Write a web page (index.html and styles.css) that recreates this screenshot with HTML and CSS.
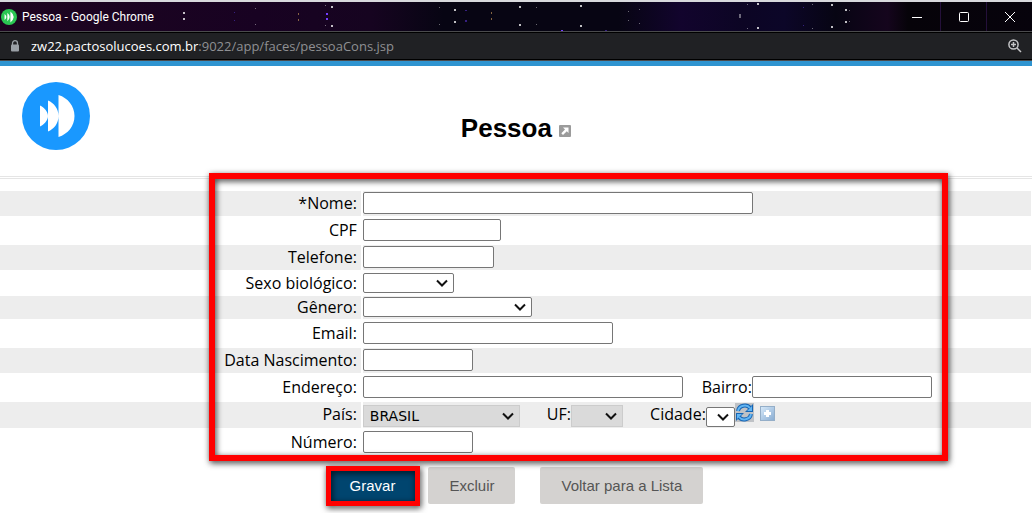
FILE: index.html
```html
<!DOCTYPE html>
<html lang="pt-BR">
<head>
<meta charset="utf-8">
<title>Pessoa</title>
<link rel="stylesheet" href="styles.css">
</head>
<body>
<header class="titlebar">
  <svg class="stars" viewBox="0 0 1032 29" preserveAspectRatio="xMidYMid slice" aria-hidden="true">
    <g fill="#fff">
      <path opacity=".75" d="M183 10h2v2h-2zM183 16h2v2h-2zM331 4h2v2h-2zM331 23h2v2h-2zM454 7h2v2h-2zM454 19h2v2h-2zM519 4h2v2h-2zM519 22h2v2h-2zM580 3h2v2h-2zM580 23h2v2h-2zM757 1h2v2h-2zM757 25h2v2h-2zM831 2h2v2h-2zM831 24h2v2h-2zM845 7h2v2h-2zM845 19h2v2h-2z"/>
      <path opacity=".4" d="M255 6h1v1h-1zM255 22h1v1h-1zM325 3h1v1h-1zM325 23h1v1h-1zM439 5h1v1h-1zM439 22h1v1h-1zM536 5h1v1h-1zM536 22h1v1h-1zM628 9h1v1h-1zM628 18h1v1h-1zM639 7h1v1h-1zM639 21h1v1h-1zM739 12h2v4h-2zM747 2h1v1h-1zM747 26h1v1h-1zM812 2h1v1h-1zM812 26h1v1h-1zM849 8h1v1h-1zM849 19h1v1h-1z"/>
    </g>
    <path fill="#bb8d55" opacity=".7" d="M298 11h1v2h-1zM298 17h1v2h-1zM491 10h1v2h-1zM491 16h1v2h-1z"/>
    <path fill="#743cff" d="M326 11h2v2h-2zM326 16h2v2h-2zM561 28h2v1h-2z"/>
    <path fill="#362080" d="M234 10h1v1h-1zM234 18h1v1h-1zM465 8h2v1h-2zM465 18h2v2h-2zM803 5h1v1h-1zM803 23h1v1h-1zM605 28h2v1h-2z"/>
  </svg>
  <svg class="favicon" viewBox="0 0 68 68" aria-hidden="true"><circle cx="34" cy="34" r="34" fill="#2bc653"/><path fill="#fff" d="M15 21q16 13 0 26zM27 16q20 18 0 36zM40 11q28 23 0 46z"/></svg>
  <span class="window-title">Pessoa - Google Chrome</span>
  <div class="window-controls">
    <button type="button" aria-label="Minimizar"><svg viewBox="0 0 12 12"><path d="M1 6.500h10"/></svg></button>
    <button type="button" aria-label="Maximizar"><svg viewBox="0 0 12 12"><rect x="1.500" y="1.500" width="9" height="9" rx="1"/></svg></button>
    <button type="button" aria-label="Fechar"><svg viewBox="0 0 12 12"><path d="M1 1l10 10M11 1L1 11"/></svg></button>
  </div>
</header>
<div class="urlbar">
  <svg class="lock" viewBox="0 0 10 12" aria-hidden="true"><path fill="none" stroke="#9aa0a6" stroke-width="1.300" d="M2.500 5V3.200a2.500 2.500 0 0 1 5 0V5"/><rect x="1" y="4.500" width="8" height="7" rx="1" fill="#9aa0a6"/></svg>
  <span class="url"><b>zw22.pactosolucoes.com.br</b>:9022/app/faces/pessoaCons.jsp</span>
  <svg class="magnifier" viewBox="0 0 14 14" aria-hidden="true"><circle cx="5.500" cy="5.500" r="4.600"/><path d="M9 9l4 4M3 5.500h5M5.500 3v5"/></svg>
</div>
<main>
  <div class="page-head">
    <svg class="logo" viewBox="0 0 68 68" role="img" aria-label="Pacto"><circle cx="34" cy="34" r="34" fill="#1998ff"/><path fill="#fff" d="M18 23.500c4 2 8 6 8 10.500s-4 8.500-8 10.500zM26 18.500c6 2.500 10.500 8 10.500 15.500S32 47 26 49.500zM36.500 13C46 16 52.500 24 52.500 34S46 52 36.500 55z"/></svg>
    <h1>Pessoa
      <a href="#" aria-label="Abrir em nova janela"><svg viewBox="0 0 12 12"><rect width="12" height="12" rx="1" fill="#9b9b9b"/><path d="M4 2.500h5.500V8L7.800 6.300 4 10 2.300 8.300 6 4.500z" fill="#fff"/></svg></a>
    </h1>
  </div>
  <form>
    <div class="fields">
      <div class="row striped"><label for="nome">*Nome:</label><div class="cell"><input id="nome" class="w-name" type="text"></div></div>
      <div class="row"><label for="cpf">CPF</label><div class="cell"><input id="cpf" class="w-cpf" type="text"></div></div>
      <div class="row striped"><label for="tel">Telefone:</label><div class="cell"><input id="tel" class="w-phone" type="text"></div></div>
      <div class="row compact"><label for="sexo">Sexo biológico:</label><div class="cell"><select id="sexo" class="w-sex"><option></option></select></div></div>
      <div class="row striped choice"><label for="genero">Gênero:</label><div class="cell"><select id="genero" class="w-gender"><option></option></select></div></div>
      <div class="row"><label for="email">Email:</label><div class="cell"><input id="email" class="w-email" type="text"></div></div>
      <div class="row striped"><label for="nasc">Data Nascimento:</label><div class="cell"><input id="nasc" class="w-short" type="text"></div></div>
      <div class="row"><label for="end">Endereço:</label><div class="cell"><input id="end" class="w-address" type="text"><label class="inline bairro" for="bairro">Bairro:</label><input id="bairro" class="w-district" type="text"></div></div>
      <div class="row striped location"><label for="pais">País:</label><div class="cell"><select id="pais" class="w-country locked"><option>BRASIL</option></select><label class="inline uf" for="uf">UF:</label><select id="uf" class="w-state locked"><option></option></select><label class="inline cidade" for="cidade">Cidade:</label><select id="cidade" class="w-city"><option></option></select><button class="icon-button refresh" type="button" aria-label="Atualizar"><svg viewBox="0 0 19 19"><rect width="19" height="19" fill="#bfc2c6"/><g fill="none" stroke="#1765b4" stroke-width="4"><path d="M3 8c1-6 9-7 12-3M16 11c-1 6-9 7-12 3"/></g><path fill="#1765b4" d="M18 1v8h-8zM1 18v-8h8z"/><g fill="none" stroke="#62b5f2" stroke-width="2"><path d="M3 8c1-6 9-7 12-3M16 11c-1 6-9 7-12 3"/></g><path fill="#62b5f2" d="M17 3v5h-5zM2 16v-5h5z"/></svg></button><button class="icon-button add" type="button" aria-label="Adicionar cidade"><svg viewBox="0 0 15 15"><defs><linearGradient id="add-fill" x2="1" y2="1"><stop stop-color="#d8eafa"/><stop offset="1" stop-color="#88acd2"/></linearGradient></defs><rect x=".5" y=".5" width="14" height="14" fill="url(#add-fill)" stroke="#94aec8"/><path d="M6 4h3v2h2v3H9v2H6V9H4V6h2z" fill="#fff"/></svg></button></div></div>
      <div class="row"><label for="numero">Número:</label><div class="cell"><input id="numero" class="w-short" type="text"></div></div>
      <div class="highlight area"></div>
    </div>
    <div class="actions">
      <div class="marked"><button class="btn primary" type="button">Gravar</button><div class="highlight around"></div></div>
      <button class="btn" type="button">Excluir</button>
      <button class="btn back" type="button">Voltar para a Lista</button>
    </div>
  </form>
</main>
</body>
</html>
```
FILE: styles.css
```css
* { box-sizing: border-box; }
body { margin: 0; background: #fff; color: #000; font-family: "Liberation Sans", Arial, sans-serif; }
button, input, select { margin: 0; }

.titlebar {
  position: relative;
  display: flex;
  align-items: center;
  height: 31px;
  padding-left: 1px;
  border-top: 2px solid #d8d9dd;
  background: linear-gradient(90deg, #1d0520, #180222 25%, #160420 36%, #070513 43%, #070513 60%, #12042d 66%, #0c0524 72%, #0c0628 76%, #070513 81%, #15051d 86%, #060309 88%, #07030c);
}
.stars { position: absolute; inset: 0; width: 100%; height: 100%; }
.favicon { width: 16px; height: 16px; margin-right: 5px; }
.favicon, .window-title, .window-controls { position: relative; }
.window-title { color: #fff; font: 12px Roboto, "Open Sans", sans-serif; }
.window-controls { display: flex; height: 100%; margin-left: auto; }
.window-controls button {
  display: grid;
  place-items: center;
  width: 46px;
  padding: 0;
  border: 0;
  border-left: 1px solid #24103a;
  background: none;
}
.window-controls button:first-child { border-left: 0; }
.window-controls svg { width: 12px; height: 12px; fill: none; stroke: #fff; stroke-width: 1; }

.urlbar {
  display: flex;
  align-items: center;
  height: 30px;
  padding: 0 10px;
  border-top: 1px solid #4a4b4d;
  border-bottom: 1px solid #4a4b4d;
  background: #202124;
  box-shadow: inset 0 1px #000, inset 0 -1px #000;
}
.lock { width: 10px; height: 12px; margin-right: 11px; }
.url { color: #8f9093; font: 13px "Open Sans", sans-serif; }
.url b { color: #fff; font-weight: 400; }
.magnifier { width: 14px; height: 14px; margin-left: auto; fill: none; stroke: #c4c5c7; stroke-width: 1.5; }

.page-head {
  position: relative;
  display: flex;
  justify-content: center;
  height: 118px;
  border-top: 5px solid #2f94d0;
  border-bottom: 3px double #e5e5e5;
}
.logo { position: absolute; left: 22px; top: 16px; width: 68px; height: 68px; }
h1 { margin: 0; padding-top: 46px; font-size: 26px; line-height: 32px; }
h1 svg { width: 12px; height: 12px; }

.fields { position: relative; display: grid; gap: 2px; padding: 12px 1px 0 0; }
.row { display: grid; grid-template-columns: 35% 1fr; column-gap: 2px; min-height: 25px; }
.row.compact { min-height: 22px; }
.row.choice { min-height: 23px; }
.row.location { min-height: 26px; }
.striped > * { background: #ededed; }
label { font: 16px/24px "Open Sans", sans-serif; white-space: nowrap; }
.compact label, .choice label { line-height: 22px; }
.row > label { padding-right: 4px; text-align: right; }
.cell { display: flex; align-items: flex-start; padding-top: 1px; }
input { height: 22px; padding: 1px 2px; border: 1px solid #767676; border-radius: 2px; }
select {
  height: 20px;
  padding: 0 0 0 6px;
  border: 1px solid #767676;
  border-radius: 2px;
  appearance: none;
  background: #fff url("data:image/svg+xml,%3Csvg xmlns='http://www.w3.org/2000/svg' width='12' height='8' viewBox='0 0 12 8'%3E%3Cpath d='M1 1.500l5 5 5-5' fill='none' stroke='%23111' stroke-width='2'/%3E%3C/svg%3E") right 5px center no-repeat;
  color: #000;
  font: 14px "DejaVu Sans", sans-serif;
}
select.locked { height: 22px; border-color: #ccc; border-radius: 0; background-color: #dadada; }
.w-name { width: 390px; }
.w-cpf { width: 138px; }
.w-phone { width: 131px; }
.w-sex { width: 91px; }
.w-gender { width: 169px; }
.w-email { width: 250px; }
.w-short { width: 110px; }
.w-address { width: 320px; }
.w-district { width: 180px; }
.w-country { width: 157px; }
.w-state { width: 52px; }
.w-city { width: 29px; }
.inline { line-height: 22px; text-align: right; }
.bairro { width: 69px; }
.uf { width: 51px; }
.cidade { width: 83px; }
.location select { margin-top: 2px; }
.location .w-city { margin-top: 4px; }
.icon-button { display: block; padding: 0; border: 0; background: none; }
.icon-button svg { display: block; width: 100%; height: 100%; }
.refresh { width: 19px; height: 19px; }
.add { width: 15px; height: 15px; margin: 3px 0 0 6px; }

.highlight { position: absolute; border: 6px solid #f00; pointer-events: none; filter: drop-shadow(1px 2px 3px rgba(0, 0, 0, 0.8)); }
.area { left: calc(35% - 152px); top: -6px; bottom: -6px; width: 739px; }
.around { inset: -1px -4px -2px -3px; border-width: 5px; }

.actions { display: flex; justify-content: center; padding: 12px 0; }
.marked { position: relative; margin-right: 12px; }
.btn { height: 37px; padding: 0 21px; border: 0; border-radius: 2px; background: #d4d2d0; color: #555; font: 15px "Liberation Sans", Arial, sans-serif; }
.btn.primary { background: #00456f; color: #fff; }
.btn.back { margin-left: 25px; }
```
